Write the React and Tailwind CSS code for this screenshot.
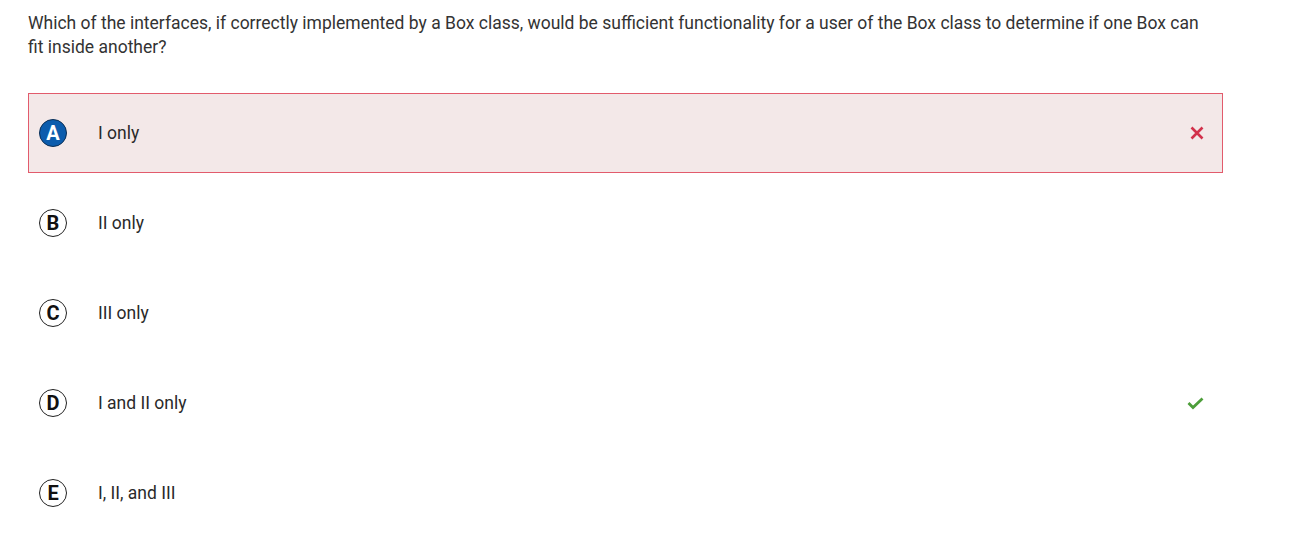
import React from "react";

const options = [
  { l: "A", t: "I only", selected: true, mark: "x" },
  { l: "B", t: "II only" },
  { l: "C", t: "III only" },
  { l: "D", t: "I and II only", mark: "check" },
  { l: "E", t: "I, II, and III" },
];

function XIcon() {
  return (
    <svg width="14" height="14" viewBox="0 0 14 14">
      <path d="M1.5 1.5 L12.5 12.5 M12.5 1.5 L1.5 12.5" stroke="#d2314b" strokeWidth="2.6" strokeLinecap="butt" />
    </svg>
  );
}

function CheckIcon() {
  return (
    <svg width="17" height="13" viewBox="0 0 17 13">
      <path d="M1.5 6 L6 10.5 L15.5 1.5" stroke="#4d9e3a" strokeWidth="2.8" fill="none" />
    </svg>
  );
}

export default function App() {
  return (
    <div
      className="bg-white w-[1306px] h-[541px] pl-[28px] pt-[11px] text-[#333333]"
      style={{ fontFamily: "Roboto, 'Liberation Sans', sans-serif" }}
    >
      <p className="w-[1185px] text-[17.5px] leading-[24px]">
        Which of the interfaces, if correctly implemented by a Box class, would be sufficient functionality for a user of the Box class to determine if one Box can fit inside another?
      </p>
      <div className="mt-[34px] w-[1195px] flex flex-col gap-[10px]">
        {options.map((o) => (
          <div
            key={o.l}
            className={
              "h-[80px] flex items-center pl-[10px] pr-[18px] border " +
              (o.selected ? "border-[#e25b6c] bg-[#f3e8e8]" : "border-transparent")
            }
          >
            <div
              className={
                "w-[28px] h-[28px] rounded-full flex items-center justify-center text-[20px] leading-none font-bold border-[1.5px] " +
                (o.selected
                  ? "bg-[#0b5cad] border-[#0a2e55] text-white"
                  : "bg-white border-[#222222] text-[#111111]")
              }
            >
              {o.l}
            </div>
            <div className="ml-[31px] text-[17.5px] text-[#2a2a2a] flex-1">{o.t}</div>
            {o.mark === "x" && <XIcon />}
            {o.mark === "check" && <CheckIcon />}
          </div>
        ))}
      </div>
    </div>
  );
}
